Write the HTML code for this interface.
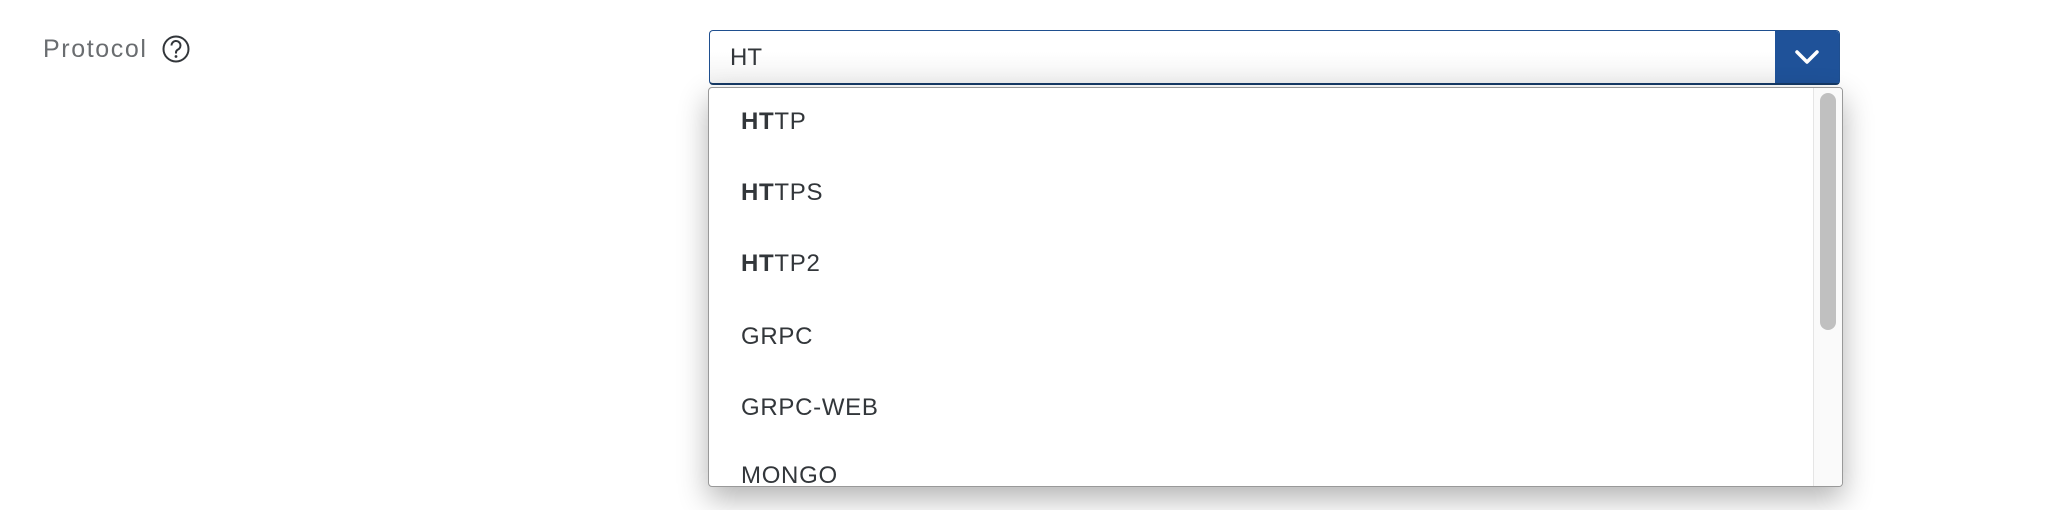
<!DOCTYPE html>
<html><head><style>
body{margin:0;width:2064px;height:510px;background:#fff;position:relative;overflow:hidden;font-family:"Liberation Sans",sans-serif;}
.lbl{position:absolute;left:43px;top:35px;font-size:25px;letter-spacing:1.6px;color:#6a6d70;}
.q{position:absolute;left:161px;top:34px;}
.inp{position:absolute;left:709px;top:30px;width:1129px;height:52px;border:1px solid #1f4f8f;border-bottom:2px solid #163a66;border-radius:4px;background:linear-gradient(#fff 40%,#f2f2f2);box-sizing:content-box;}
.inp span{position:absolute;left:20px;top:13px;font-size:24px;color:#32363a;}
.btn{position:absolute;right:0;top:0;width:64px;height:52px;background:#1f5299;border-radius:0 3px 0 0;}
.dd{position:absolute;left:708px;top:87px;width:1133px;height:398px;background:#fff;border:1px solid #999;border-radius:4px;box-shadow:0 12px 30px rgba(0,0,0,.3);overflow:hidden;}
.sb{position:absolute;right:0;top:0;width:28px;height:100%;background:#fafafa;border-left:1px solid #e5e5e5;}
.th{position:absolute;left:6px;top:5px;width:16px;height:237px;background:#c0c0c0;border-radius:8px;}
.it{position:absolute;left:32px;font-size:24px;letter-spacing:0.7px;color:#32363a;line-height:30px;}
</style></head><body>
<div class="lbl">Protocol</div>
<svg class="q" width="30" height="30" viewBox="0 0 30 30"><circle cx="15" cy="15" r="12.5" fill="none" stroke="#32363a" stroke-width="2"/><path d="M10.5 11.5a4.5 4.5 0 1 1 6.5 4c-1.5.8-2 1.6-2 3v1" fill="none" stroke="#32363a" stroke-width="2"/><circle cx="15" cy="22.5" r="1.4" fill="#32363a"/></svg>
<div class="inp"><span>HT</span><div class="btn"><svg width="64" height="52" viewBox="0 0 64 52"><path d="M22 21l10 10 10-10" fill="none" stroke="#fff" stroke-width="3.5" stroke-linecap="round" stroke-linejoin="round"/></svg></div></div>
<div class="dd">
<div class="it" style="top:19px"><b>HT</b>TP</div>
<div class="it" style="top:90px"><b>HT</b>TPS</div>
<div class="it" style="top:161px"><b>HT</b>TP2</div>
<div class="it" style="top:234px">GRPC</div>
<div class="it" style="top:305px">GRPC-WEB</div>
<div class="it" style="top:373px">MONGO</div>
<div class="sb"><div class="th"></div></div>
</div>
</body></html>
